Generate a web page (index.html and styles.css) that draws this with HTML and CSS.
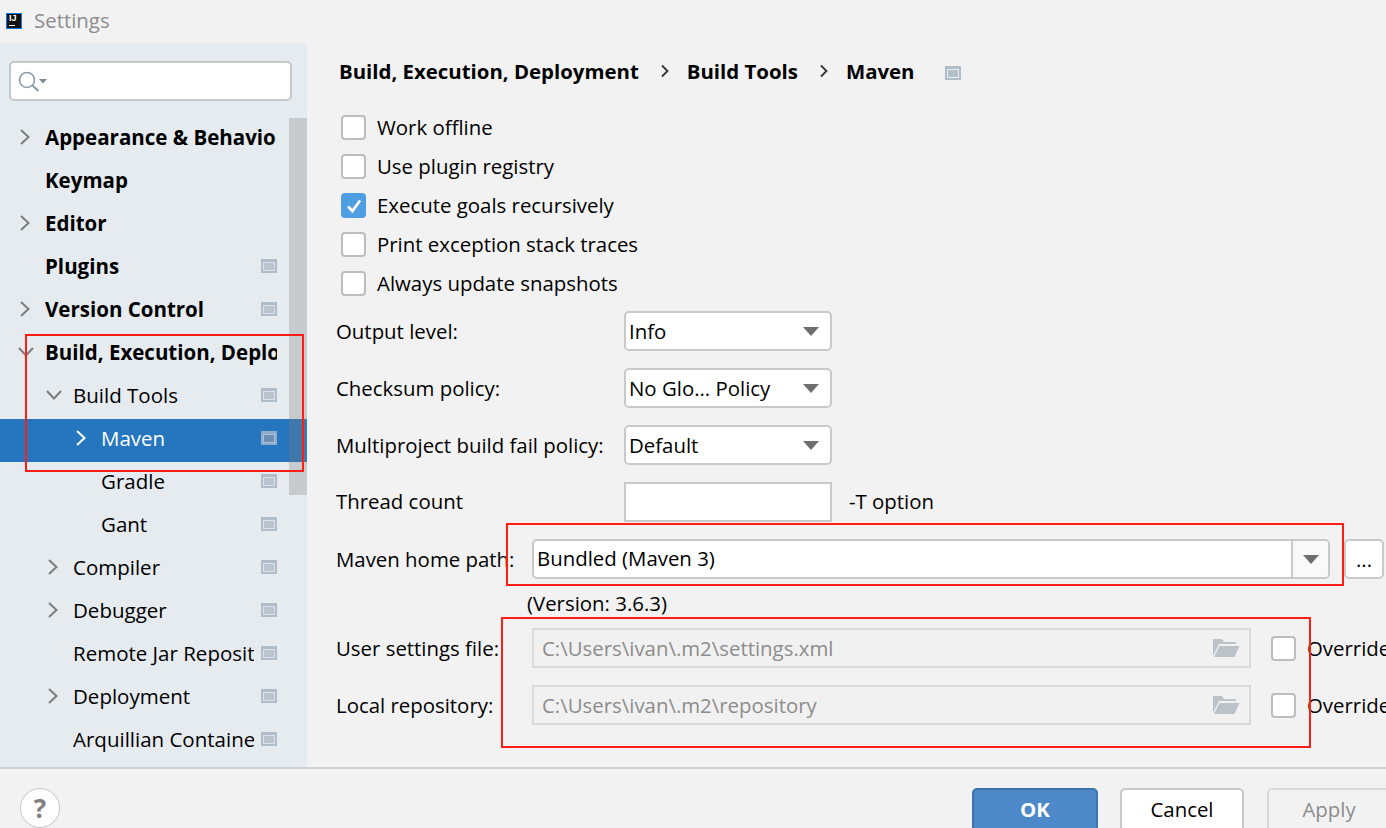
FILE: index.html
```html
<!DOCTYPE html>
<html lang="en">
<head>
<meta charset="utf-8">
<title>Settings</title>
<link rel="stylesheet" href="styles.css">
</head>
<body>
<div class="window">
  <header class="titlebar">
    <span class="app-logo"><span class="app-logo-text">IJ</span><span class="app-logo-bar"></span></span>
    <span class="title">Settings</span>
  </header>
  <div class="content">
    <aside class="sidebar">
      <div class="search">
        <svg class="search-icon" width="30" height="24" viewBox="0 0 30 24"><circle cx="9" cy="11" r="7.500" fill="none" stroke="#8e9aa3" stroke-width="1.600"/><path d="M14.500 16.500l6 5.500" stroke="#8e9aa3" stroke-width="2.200" fill="none"/><path d="M21 10h8l-4 4.500z" fill="#7e8a93"/></svg>
      </div>
      <nav class="tree">
        <div class="row l0 bold"><svg class="chev" width="12" height="18" viewBox="0 0 12 18"><path d="M2 2l7.500 7-7.500 7" fill="none" stroke="#7d7d7d" stroke-width="2"/></svg><span class="label">Appearance &amp; Behavior</span></div>
        <div class="row l0 bold"><span class="nochev"></span><span class="label">Keymap</span></div>
        <div class="row l0 bold"><svg class="chev" width="12" height="18" viewBox="0 0 12 18"><path d="M2 2l7.500 7-7.500 7" fill="none" stroke="#7d7d7d" stroke-width="2"/></svg><span class="label">Editor</span></div>
        <div class="row l0 bold"><span class="nochev"></span><span class="label">Plugins</span><span class="badge"></span></div>
        <div class="row l0 bold"><svg class="chev" width="12" height="18" viewBox="0 0 12 18"><path d="M2 2l7.500 7-7.500 7" fill="none" stroke="#7d7d7d" stroke-width="2"/></svg><span class="label">Version Control</span><span class="badge"></span></div>
        <div class="row l0 bold"><svg class="chev" width="18" height="12" viewBox="0 0 18 12"><path d="M2 2l7 7.500 7-7.500" fill="none" stroke="#7d7d7d" stroke-width="2"/></svg><span class="label">Build, Execution, Deployment</span></div>
        <div class="row l1"><svg class="chev" width="18" height="12" viewBox="0 0 18 12"><path d="M2 2l7 7.500 7-7.500" fill="none" stroke="#7d7d7d" stroke-width="2"/></svg><span class="label">Build Tools</span><span class="badge"></span></div>
        <div class="row l2 selected"><svg class="chev" width="12" height="18" viewBox="0 0 12 18"><path d="M2 2l7.500 7-7.500 7" fill="none" stroke="#ffffff" stroke-width="2"/></svg><span class="label">Maven</span><span class="badge"></span></div>
        <div class="row l2"><span class="nochev"></span><span class="label">Gradle</span><span class="badge"></span></div>
        <div class="row l2"><span class="nochev"></span><span class="label">Gant</span><span class="badge"></span></div>
        <div class="row l1"><svg class="chev" width="12" height="18" viewBox="0 0 12 18"><path d="M2 2l7.500 7-7.500 7" fill="none" stroke="#7d7d7d" stroke-width="2"/></svg><span class="label">Compiler</span><span class="badge"></span></div>
        <div class="row l1"><svg class="chev" width="12" height="18" viewBox="0 0 12 18"><path d="M2 2l7.500 7-7.500 7" fill="none" stroke="#7d7d7d" stroke-width="2"/></svg><span class="label">Debugger</span><span class="badge"></span></div>
        <div class="row l1"><span class="nochev"></span><span class="label">Remote Jar Repositories</span><span class="badge"></span></div>
        <div class="row l1"><svg class="chev" width="12" height="18" viewBox="0 0 12 18"><path d="M2 2l7.500 7-7.500 7" fill="none" stroke="#7d7d7d" stroke-width="2"/></svg><span class="label">Deployment</span><span class="badge"></span></div>
        <div class="row l1"><span class="nochev"></span><span class="label">Arquillian Containers</span><span class="badge"></span></div>
        <div class="scrollbar"></div>
      </nav>
    </aside>
    <main class="main">
      <div class="breadcrumb">
        <span class="crumb">Build, Execution, Deployment</span>
        <svg class="crumb-sep" width="10" height="14" viewBox="0 0 10 14"><path d="M2 1.500l5.500 5.500-5.500 5.500" fill="none" stroke="#333" stroke-width="1.800"/></svg>
        <span class="crumb">Build Tools</span>
        <svg class="crumb-sep" width="10" height="14" viewBox="0 0 10 14"><path d="M2 1.500l5.500 5.500-5.500 5.500" fill="none" stroke="#333" stroke-width="1.800"/></svg>
        <span class="crumb">Maven</span>
        <span class="badge crumb-badge"></span>
      </div>
      <div class="checks">
        <div class="check-row"><span class="check"></span><span class="check-text">Work offline</span></div>
        <div class="check-row"><span class="check"></span><span class="check-text">Use plugin registry</span></div>
        <div class="check-row"><span class="check checked"><svg width="18" height="16" viewBox="0 0 18 16"><path d="M3 8.500l4.500 4.500 7.500-10.500" fill="none" stroke="#fff" stroke-width="2.800"/></svg></span><span class="check-text">Execute goals recursively</span></div>
        <div class="check-row"><span class="check"></span><span class="check-text">Print exception stack traces</span></div>
        <div class="check-row"><span class="check"></span><span class="check-text">Always update snapshots</span></div>
      </div>
      <div class="form">
        <div class="form-row"><label class="form-label">Output level:</label><div class="combo"><span class="combo-text">Info</span><span class="arrow"></span></div></div>
        <div class="form-row"><label class="form-label">Checksum policy:</label><div class="combo"><span class="combo-text">No Glo... Policy</span><span class="arrow"></span></div></div>
        <div class="form-row"><label class="form-label">Multiproject build fail policy:</label><div class="combo"><span class="combo-text">Default</span><span class="arrow"></span></div></div>
        <div class="form-row"><label class="form-label raised">Thread count</label><div class="text-input"></div><span class="hint">-T option</span></div>
        <div class="form-row"><label class="form-label short">Maven home path:</label><div class="path-combo"><span class="path-text">Bundled (Maven 3)</span><span class="path-arrow"><span class="arrow"></span></span></div><button class="dots">...</button></div>
        <div class="version">(Version: 3.6.3)</div>
        <div class="form-row"><label class="form-label short">User settings file:</label><div class="disabled-field"><span class="disabled-text">C:\Users\ivan\.m2\settings.xml</span><svg class="folder" width="28" height="22" viewBox="0 0 28 22"><path d="M1 19V2h9l2 3h12v2H7L1 19z" fill="#bcc3c8"/><path d="M7.500 9H27.500l-5 11H2z" fill="#bcc3c8"/></svg></div><span class="check override-check"></span><span class="override">Override</span></div>
        <div class="form-row"><label class="form-label short">Local repository:</label><div class="disabled-field"><span class="disabled-text">C:\Users\ivan\.m2\repository</span><svg class="folder" width="28" height="22" viewBox="0 0 28 22"><path d="M1 19V2h9l2 3h12v2H7L1 19z" fill="#bcc3c8"/><path d="M7.500 9H27.500l-5 11H2z" fill="#bcc3c8"/></svg></div><span class="check override-check"></span><span class="override">Override</span></div>
      </div>
    </main>
  </div>
  <footer class="footer">
    <button class="help">?</button>
    <div class="actions">
      <button class="btn primary">OK</button>
      <button class="btn">Cancel</button>
      <button class="btn disabled">Apply</button>
    </div>
  </footer>
  <div class="mark mark-tree"></div>
  <div class="mark mark-home"></div>
  <div class="mark mark-files"></div>
</div>
</body>
</html>
```

FILE: styles.css
```css
* { box-sizing: border-box; }
html, body { margin: 0; height: 828px; overflow: hidden; }
body { font-family: "Open Sans", "Noto Sans", sans-serif; font-size: 20.400px; color: #000; background: #f2f2f2; }

.window { position: relative; width: 1386px; height: 828px; overflow: hidden; display: flex; flex-direction: column; }

.titlebar { height: 43px; flex: none; display: flex; align-items: center; padding: 0 0 2px 6px; }
.app-logo { width: 16px; height: 16px; background: #111; outline: 1px solid #0a74da; outline-offset: -1px; position: relative; display: block; flex: none; }
.app-logo-text { position: absolute; left: 3px; top: 1px; font-family: "Liberation Sans", sans-serif; font-size: 9px; line-height: 9px; font-weight: bold; color: #fff; }
.app-logo-bar { position: absolute; left: 3px; bottom: 3px; width: 6px; height: 1px; background: #fff; }
.title { margin-left: 12px; padding-bottom: 2px; color: #8c8c8c; }

.content { height: 724px; flex: none; display: flex; }

.sidebar { width: 307px; flex: none; background: #e6ebf0; padding-top: 18px; }
.search { width: 283px; height: 40px; margin-left: 9px; background: #fff; border: 2px solid #c4c8cc; border-radius: 5px; display: flex; align-items: center; padding-left: 7px; }
.search-icon { display: block; }

.tree { position: relative; margin-top: 17px; }
.row { height: 43px; display: flex; align-items: center; padding: 0 30px 6px 0; white-space: nowrap; font-size: 20.500px; }
.bold { font-weight: 700; }
.chev, .nochev { flex: none; display: block; }
.nochev { width: 12px; }
.row .chev[width="18"] { margin-left: -2px; margin-right: -4px; }
.l0 { padding-left: 19px; }
.l1 { padding-left: 47px; }
.l2 { padding-left: 75px; }
.label { flex: 1; min-width: 0; overflow: hidden; margin-left: 14px; }
.selected { background: #2675bf; color: #fff; }
.badge { flex: none; width: 16px; height: 14px; margin-left: 7px; border: 2px solid #b0bcc7; border-top-width: 3px; background: #b9c4ce; box-shadow: inset 0 0 0 1px #dce2e8; }
.selected .badge { border-color: #8eaccb; background: #6c8fb3; box-shadow: inset 0 0 0 1px #a9c0d8; }
.scrollbar { position: absolute; top: 0; right: 0; width: 18px; height: 377px; background: rgba(130, 130, 130, 0.3); }

.main { flex: 1; min-width: 0; padding: 13px 0 0 30px; }
.breadcrumb { height: 30px; margin-left: 2px; display: flex; align-items: center; font-weight: 700; white-space: nowrap; }
.crumb-sep { margin: 0 17px 0 21px; flex: none; }
.crumb-badge { margin: 3px 0 0 30px; background: #b4bfc8; box-shadow: inset 0 0 0 1px #eaeef1; }

.checks { margin-top: 22px; }
.check-row { height: 39px; display: flex; align-items: center; margin-left: 4px; white-space: nowrap; }
.check-text { padding-bottom: 2px; }
.check { width: 25px; height: 25px; flex: none; background: #fff; border: 2px solid #bdbdbd; border-radius: 4px; margin-right: 11px; display: flex; align-items: center; justify-content: center; }
.checked { background: #4f9ee3; border-color: #4f9ee3; }

.form { margin-top: 8px; display: flex; flex-direction: column; gap: 17px; }
.form-row { height: 40px; display: flex; align-items: center; white-space: nowrap; }
.form-label { width: 288px; margin-left: -1px; flex: none; }
.form-label.short { width: 196px; }
.form-label.raised { padding-bottom: 3px; }
.combo { width: 208px; height: 40px; flex: none; background: #fff; border: 2px solid #c9c9c9; border-radius: 5px; display: flex; align-items: center; padding: 0 11px 0 3px; }
.combo-text { flex: 1; }
.arrow { width: 0; height: 0; flex: none; border-left: 8px solid transparent; border-right: 8px solid transparent; border-top: 9px solid #6e6e6e; }
.text-input { width: 208px; height: 40px; flex: none; background: #fff; border: 2px solid #c9c9c9; }
.hint { margin-left: 17px; padding-bottom: 2px; }
.path-combo { width: 798px; height: 40px; flex: none; background: #fff; border: 2px solid #c9c9c9; border-radius: 5px; display: flex; align-items: stretch; }
.path-text { flex: 1; padding-left: 3px; line-height: 35px; }
.path-arrow { width: 37px; flex: none; background: #f9f9f9; border-left: 2px solid #c9c9c9; border-radius: 0 4px 4px 0; display: flex; align-items: center; justify-content: center; }
.dots { width: 40px; height: 40px; margin-left: 14px; flex: none; background: #fff; border: 2px solid #c9c9c9; border-radius: 5px; font: inherit; padding: 0; }
.version { height: 28px; margin: -6px 0 -7px 190px; line-height: 26px; white-space: nowrap; }
.disabled-field { width: 719px; height: 40px; flex: none; background: #f1f1f1; border: 2px solid #dadada; display: flex; align-items: center; justify-content: space-between; padding: 0 9px 0 8px; }
.disabled-text { color: #8c8c8c; }
.folder { display: block; flex: none; }
.override-check { margin: 0 11px 0 20px; }

.footer { flex: 1; min-height: 0; border-top: 2px solid #d1d1d1; display: flex; justify-content: space-between; padding: 19px 0 0 20px; overflow: hidden; }
.help { width: 40px; height: 40px; border-radius: 50%; background: #fff; border: 1px solid #c4c4c4; padding: 0; font: 700 26px/36px "Open Sans", sans-serif; color: #808080; }
.actions { display: flex; align-items: flex-start; gap: 22px; margin-right: -5px; }
.btn { width: 124px; height: 44px; background: #fff; border: 2px solid #c9c9c9; border-radius: 5px; font: inherit; padding: 0 0 2px; color: #000; }
.primary { width: 126px; background: #4d89c9; border-color: #3f74ad; color: #fff; font-weight: 700; }
.disabled { margin-left: 1px; background: #f2f2f2; border-color: #d9d9d9; color: #8c8c8c; }

.mark { position: absolute; border: 2px solid #fe1e14; pointer-events: none; }
.mark-tree { left: 25px; top: 334px; width: 279px; height: 138px; }
.mark-home { left: 506px; top: 523px; width: 838px; height: 63px; }
.mark-files { left: 501px; top: 617px; width: 810px; height: 131px; }
```
